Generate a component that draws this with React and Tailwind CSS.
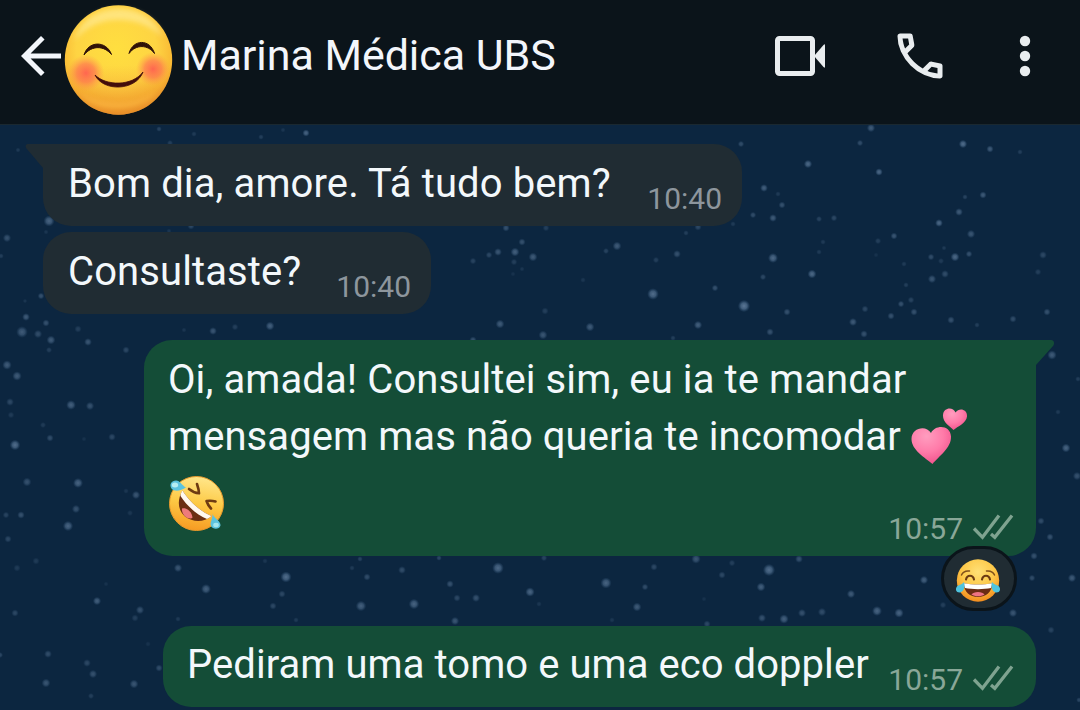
import React from "react";

// [x, y, radius, opacity]
const stars = [
  [871, 3, 3, 0.6], [860, 18, 2.3, 0.45], [741, 19, 2.3, 0.45], [963, 19, 3, 0.8], [990, 24, 2.6, 0.6], [1020, 27, 2, 0.3],
  [808, 39, 3, 0.75], [879, 47, 2.7, 0.75], [764, 63, 2.8, 0.65], [782, 80, 2.5, 0.5], [753, 90, 2.3, 0.45], [773, 93, 2.8, 0.6],
  [819, 94, 2.2, 0.35], [834, 93, 2.4, 0.4], [778, 69, 2, 0.25], [983, 70, 2.6, 0.6], [965, 72, 2, 0.35], [959, 87, 2.8, 0.6],
  [939, 98, 2.8, 0.75], [971, 109, 3, 0.55], [894, 111, 2.5, 0.55], [878, 116, 2.3, 0.3], [823, 117, 2, 0.25], [819, 127, 2, 0.25],
  [955, 132, 3.2, 0.75], [969, 129, 2.4, 0.5], [931, 132, 2.4, 0.45], [944, 123, 1.8, 0.25], [941, 136, 2.2, 0.25], [773, 133, 3.6, 0.75],
  [763, 152, 2.3, 0.4], [812, 149, 3.2, 0.75], [904, 139, 2, 0.25], [876, 130, 1.8, 0.15], [945, 149, 2.8, 0.45], [932, 154, 3, 0.55],
  [1043, 130, 2.8, 0.4], [1038, 147, 2.4, 0.3], [906, 160, 2, 0.3], [911, 175, 2.4, 0.35], [901, 179, 2.4, 0.5], [914, 187, 2.6, 0.5],
  [891, 191, 2.6, 0.5], [865, 184, 2.5, 0.4], [853, 197, 2.9, 0.6], [864, 209, 2.7, 0.5], [653, 169, 4.2, 0.8], [715, 163, 2.4, 0.5],
  [744, 181, 4.4, 0.9], [787, 187, 2.6, 0.5], [698, 200, 3, 0.65], [770, 207, 2.7, 0.5], [673, 213, 2, 0.3], [617, 121, 3.2, 0.6],
  [606, 126, 2.2, 0.35], [656, 135, 2.3, 0.3], [677, 129, 2.8, 0.5], [686, 108, 2, 0.3], [698, 102, 2.6, 0.4], [951, 195, 2.7, 0.5],
  [977, 200, 2, 0.3], [1013, 194, 2.6, 0.45], [1047, 187, 2.6, 0.5], [733, 99, 2, 0.25], [1052, 230, 3.4, 0.6], [1078, 254, 2, 0.3],
  [1058, 287, 2, 0.25], [1066, 323, 3.2, 0.7], [1077, 351, 3, 0.5], [1041, 396, 2.6, 0.45], [1050, 412, 2.6, 0.5], [1034, 431, 2.7, 0.5],
  [1032, 453, 2.4, 0.45], [1072, 453, 3, 0.6], [1013, 488, 3, 0.55], [1051, 505, 2.6, 0.35], [924, 455, 3, 0.65], [877, 486, 3.6, 0.7],
  [899, 488, 3.4, 0.7], [943, 480, 2.4, 0.3], [1079, 575, 2, 0.4],
  // top left
  [159, 4, 2, 0.35], [194, 9, 2, 0.25], [306, 8, 2.6, 0.7], [261, 12, 2, 0.3], [283, 5, 1.8, 0.2], [170, 18, 2.2, 0.3], [18, 25, 1.8, 0.25],
  [49, 96, 4, 0.7], [7, 113, 3, 0.5], [1, 131, 2, 0.3], [46, 107, 1.8, 0.2], [41, 171, 2.4, 0.5], [25, 176, 1.6, 0.2], [26, 192, 2.8, 0.6],
  [191, 101, 2.6, 0.4], [169, 106, 1.8, 0.2], [506, 103, 2.6, 0.5], [546, 103, 2.4, 0.3], [46, 198, 2.6, 0.5], [184, 205, 1.8, 0.2],
  [22, 207, 4.2, 0.6], [38, 209, 3, 0.45], [51, 215, 3.2, 0.6], [49, 225, 2.2, 0.3], [78, 204, 2.6, 0.3], [88, 217, 2.8, 0.55],
  [126, 225, 2.6, 0.4], [213, 206, 2.8, 0.55], [235, 202, 2.4, 0.3], [270, 201, 3.2, 0.65],
  // between the incoming and outgoing bubbles
  [522, 117, 2.6, 0.5], [498, 127, 2.8, 0.55], [489, 130, 2.4, 0.4], [515, 127, 3.2, 0.65], [533, 132, 3.2, 0.6], [473, 136, 2.4, 0.35],
  [514, 137, 2.4, 0.3], [522, 144, 1.8, 0.2], [513, 149, 1.8, 0.15], [583, 155, 2, 0.2], [545, 186, 2.6, 0.3], [500, 199, 3.2, 0.6],
  [543, 210, 3.2, 0.55], [590, 202, 3.2, 0.6], [473, 215, 2.6, 0.5],
  // left column
  [7, 240, 3.4, 0.6], [17, 251, 3.4, 0.6], [10, 277, 2.8, 0.4], [11, 290, 2.4, 0.25], [71, 280, 3.5, 0.65], [90, 281, 3, 0.5],
  [43, 300, 2.2, 0.25], [50, 313, 2.6, 0.45], [112, 312, 2.7, 0.4], [84, 314, 1.8, 0.15], [15, 320, 3.8, 0.8], [27, 357, 3.2, 0.5],
  [78, 358, 3.6, 0.7], [136, 370, 3, 0.55], [126, 366, 2, 0.2], [76, 384, 3, 0.5], [68, 401, 3.7, 0.7], [6, 390, 2.4, 0.35],
  [21, 390, 2.7, 0.5], [130, 388, 2.2, 0.2], [8, 414, 2.6, 0.4], [36, 436, 2.6, 0.25], [17, 443, 2.6, 0.25], [106, 459, 1.8, 0.15],
  [97, 476, 3, 0.65], [140, 485, 3, 0.5], [135, 493, 2.6, 0.3], [15, 488, 2.6, 0.4], [0, 530, 2.2, 0.4], [48, 529, 2.8, 0.45],
  [87, 538, 2.8, 0.4], [93, 549, 3, 0.5], [46, 558, 3.2, 0.55], [134, 559, 3.2, 0.55], [91, 571, 2.2, 0.3], [159, 543, 2.6, 0.45],
  [148, 519, 2, 0.15],
  // strip above the last bubble
  [178, 443, 3, 0.55], [206, 464, 3.6, 0.65], [286, 452, 4, 0.8], [282, 469, 2.6, 0.4], [273, 481, 2.6, 0.4], [178, 494, 2, 0.25],
  [296, 495, 2, 0.25], [265, 436, 2, 0.2], [360, 434, 2, 0.35], [352, 443, 2, 0.25], [367, 452, 2.6, 0.45], [402, 445, 2.8, 0.45],
  [361, 481, 3.8, 0.65], [414, 479, 3.8, 0.7], [439, 433, 2, 0.4], [450, 459, 2.7, 0.5], [457, 473, 2.6, 0.4], [476, 473, 2.9, 0.5],
  [455, 496, 3, 0.55], [498, 443, 4.2, 0.75], [544, 433, 2.3, 0.35], [530, 467, 3.4, 0.7], [539, 479, 2, 0.2], [606, 458, 4, 0.7],
  [637, 482, 3.2, 0.6], [645, 462, 2.4, 0.45], [654, 442, 2.6, 0.4], [696, 434, 3.4, 0.55], [722, 450, 2.6, 0.4], [732, 438, 2.4, 0.3],
  [769, 445, 4.4, 0.8], [761, 462, 3.2, 0.65], [799, 434, 2.8, 0.5], [762, 493, 2.9, 0.5], [784, 494, 3.4, 0.65], [802, 488, 2.9, 0.5],
  [822, 487, 3, 0.45], [851, 469, 3, 0.6], [707, 499, 2.6, 0.4], [612, 495, 2, 0.2], [704, 474, 1.8, 0.15],
];

function StarField() {
  return (
    <svg className="absolute inset-0" width="1080" height="585" viewBox="0 0 1080 585" aria-hidden="true">
      <defs>
        <radialGradient id="star">
          <stop offset="0" stopColor="#64809f" />
          <stop offset="0.5" stopColor="#516f8f" stopOpacity="0.85" />
          <stop offset="1" stopColor="#35587c" stopOpacity="0" />
        </radialGradient>
      </defs>
      {stars.map(([x, y, r, o], i) => (
        <circle key={i} cx={x} cy={y} r={r * 1.4} fill="url(#star)" opacity={o} />
      ))}
    </svg>
  );
}

function SmilingFace() {
  return (
    <svg className="shrink-0" width="110" height="112" viewBox="63 4 110 112" aria-hidden="true">
      <defs>
        <radialGradient id="face" cx="0.48" cy="0.4" r="0.62">
          <stop offset="0" stopColor="#ffdf3f" />
          <stop offset="0.6" stopColor="#fed443" />
          <stop offset="0.85" stopColor="#f9b934" />
          <stop offset="1" stopColor="#e08c2a" />
        </radialGradient>
        <linearGradient id="faceShade" x1="0" y1="0" x2="0" y2="1">
          <stop offset="0.55" stopColor="#f39a2d" stopOpacity="0" />
          <stop offset="1" stopColor="#e98a27" stopOpacity="0.7" />
        </linearGradient>
        <radialGradient id="blush">
          <stop offset="0" stopColor="#ff6150" stopOpacity="0.95" />
          <stop offset="0.5" stopColor="#ff7450" stopOpacity="0.7" />
          <stop offset="1" stopColor="#ff9a48" stopOpacity="0" />
        </radialGradient>
        <filter id="soft" x="-20%" y="-40%" width="140%" height="180%">
          <feGaussianBlur stdDeviation="2.6" />
        </filter>
      </defs>
      <ellipse cx="118.5" cy="60" rx="53.7" ry="54.7" fill="url(#face)" />
      <ellipse cx="118.5" cy="60" rx="53.7" ry="54.7" fill="url(#faceShade)" />
      <path d="M74 40C82 18 100 9 119 9s36 9 44 28C152 27 138 20 118 20S86 28 74 40Z" fill="#ffe98f" opacity="0.75" filter="url(#soft)" />
      <path d="M80 93c20 14 58 14 76-1-12 18-59 23-76 1Z" fill="#ffc04e" opacity="0.6" filter="url(#soft)" />
      <circle cx="86" cy="73" r="18.5" fill="url(#blush)" />
      <circle cx="153" cy="69" r="17" fill="url(#blush)" />
      <path d="M84 55C88 41 106 40 111.500 54.500C104 45.500 92 45 84 55Z" fill="#301208" stroke="#301208" strokeWidth="1" />
      <path d="M129 53.500C133 39 150 38.500 154.500 53.500C148 44.500 136 44 129 53.500Z" fill="#301208" stroke="#301208" strokeWidth="1" />
      <path d="M95 75C106 86 132 86.500 143 72C136 91 103 92 95 75Z" fill="#430e0b" stroke="#430e0b" strokeWidth="0.8" />
    </svg>
  );
}

function RollingLaugh() {
  return (
    <svg width="57" height="57" viewBox="168 475 57 57" className="block" aria-hidden="true">
      <defs>
        <linearGradient id="rofl" x1="0.55" y1="0" x2="0.4" y2="1">
          <stop offset="0" stopColor="#ffe68a" />
          <stop offset="0.5" stopColor="#fdc944" />
          <stop offset="1" stopColor="#f79a22" />
        </linearGradient>
      </defs>
      <circle cx="196.500" cy="503.500" r="27" fill="url(#rofl)" stroke="#e99a2c" strokeWidth="1" />
      <path d="M182.500 490.500C177 500 177.500 510 185 516.500C193 522.500 204 522.500 211.500 516C201 512 189 501 182.500 490.500Z" fill="#6b2f12" />
      <path d="M182.500 490.500C181 492.500 180.500 494.500 180.500 496C187 506 197 515 207 519C209 518 210.500 517 211.500 516C201 512 189 501 182.500 490.500Z" fill="#fff8ef" />
      <path d="M182 508.500c4-1.500 10 3 10.500 9-1 1.500-4 1-6 0-3-2-5-6-4.500-9Z" fill="#ee7b7b" />
      <path d="M189 489C192 491.500 195 493 199 493.300C199 490 198 487 197 484" fill="none" stroke="#6d3b12" strokeWidth="2.600" strokeLinecap="round" strokeLinejoin="round" />
      <path d="M215.500 501.500C212 500.500 209.500 500.500 206.500 501C207.500 504 209 506.500 211 508.500" fill="none" stroke="#6d3b12" strokeWidth="2.600" strokeLinecap="round" strokeLinejoin="round" />
      <path d="M186 487.500C181 491 174 492 171.500 488.500C169 484.500 171.500 480.500 176 480.500C180 480.500 182 485.500 186 487.500Z" fill="#5cc3df" />
      <ellipse cx="175" cy="485" rx="3.200" ry="2.500" fill="#b6eef2" />
      <path d="M212.500 514C214 518.500 221 521 220.500 525.500C219.500 529.500 213 530 211 526C209.500 522.500 213 518.500 212.500 514Z" fill="#5cc3df" />
      <ellipse cx="216" cy="525" rx="2.800" ry="2.200" fill="#a4e6ef" />
    </svg>
  );
}

function JoyFace() {
  return (
    <svg width="46" height="46" viewBox="955 557 46 46" aria-hidden="true">
      <defs>
        <radialGradient id="joy" cx="0.5" cy="0.3" r="0.7">
          <stop offset="0" stopColor="#ffe076" />
          <stop offset="0.55" stopColor="#fdc848" />
          <stop offset="1" stopColor="#f28c1e" />
        </radialGradient>
      </defs>
      <circle cx="978" cy="580.500" r="21.200" fill="url(#joy)" />
      <path d="M961.500 575C963 571.500 965.500 570.500 969.500 571M994.500 575C993 571.500 990.500 570.500 986.500 571" fill="none" stroke="#80501a" strokeWidth="1.500" strokeLinecap="round" />
      <path d="M966 579.500C967 574.500 973 574.500 974 579.500M982 579.500C983 574.500 989 574.500 990 579.500" fill="none" stroke="#6c3b13" strokeWidth="2.100" strokeLinecap="round" />
      <path d="M963.500 583C971 585 985 585 992.500 583C992 592 986 597 978 597S964 592 963.500 583Z" fill="#6b2c14" />
      <path d="M964 583.300C972 585 984 585 992 583.300C992 585.500 991.500 587 991 588C984 589.500 972 589.500 965 588C964.500 587 964 585.500 964 583.300Z" fill="#fff" />
      <path d="M971.500 594.500c2-3.500 11-3.500 13 0-3.500 2.400-9.500 2.400-13 0Z" fill="#ee7383" />
      <path d="M964 582C965.500 587 963.500 592.500 959.500 592.500C956 592.500 955 589 957 586.500C959 584.500 961.500 585 964 582Z" fill="#4fc4df" />
      <path d="M992 582C990.500 587 992.500 592.500 996.500 592.500C1000 592.500 1001 589 999 586.500C997 584.500 994.500 585 992 582Z" fill="#4fc4df" />
    </svg>
  );
}

function TwoHearts() {
  return (
    <svg width="58" height="58" viewBox="910 407 58 58" className="inline-block align-[-15px]" aria-hidden="true">
      <defs>
        <radialGradient id="heart" cx="0.38" cy="0.25" r="0.85">
          <stop offset="0" stopColor="#ff9dbf" />
          <stop offset="0.5" stopColor="#ff7ba9" />
          <stop offset="1" stopColor="#ee4a86" />
        </radialGradient>
      </defs>
      <path d="M932.500 464C925 457.500 911.500 450 911.500 439C911.500 428 926 424.500 931 433C935 424.500 950.500 424.500 951 436.500C951.500 448 938.500 456.500 932.500 464Z" fill="url(#heart)" />
      <path d="M953.500 430C949.500 426 942.500 422 943 415C943.500 407.500 953 406.500 955.500 412.500C959 407.500 967.500 409 967 416.500C966.500 423 957.500 426.500 953.500 430Z" fill="url(#heart)" />
    </svg>
  );
}

function ReadTicks() {
  return (
    <svg width="42" height="28" viewBox="973 513 42 28" fill="none" stroke="#7fa390" strokeWidth="3.300" aria-hidden="true">
      <path d="M975 528.500L983.500 537.300L1000 515.500" />
      <path d="M992 534L995.800 537.300L1013 515.500" />
    </svg>
  );
}

function Tail({ side }) {
  return side === "left" ? (
    <svg className="absolute -left-[18px] top-0" width="30" height="26" viewBox="0 0 30 26" aria-hidden="true">
      <path d="M30 0H3C.5 0 0 2.500 1.500 4.500L18 24V26H30Z" fill="#202c33" />
    </svg>
  ) : (
    <svg className="absolute -right-[18px] top-0" width="30" height="27" viewBox="0 0 30 27" aria-hidden="true">
      <path d="M0 0H27C30 0 31 3.500 29 6L12 25V27H0Z" fill="#144d37" />
    </svg>
  );
}

function Header() {
  return (
    <header className="flex h-[125px] shrink-0 items-start border-b border-[#1a2830] bg-[#0b141a] text-[#e9edef]">
      <button className="ml-[11px] mt-[26px] h-[60px] w-[52px] shrink-0 overflow-hidden" aria-label="Voltar">
        <svg width="60" height="60" viewBox="0 0 24 24" fill="#f3f6fb">
          <path d="M20 11H7.830l5.590-5.590L12 4l-8 8 8 8 1.410-1.410L7.830 13H20z" />
        </svg>
      </button>
      <div className="mt-1">
        <SmilingFace />
      </div>
      <h1 className="ml-[8px] mt-[26px] flex-1 whitespace-nowrap text-[43px] leading-[58px] tracking-[-0.05px] text-[#f3f6fb]">Marina Médica UBS</h1>
      <div className="flex pt-[26px]">
        <svg width="60" height="60" viewBox="770 26 60 60" aria-label="Chamada de vídeo">
          <rect x="777.500" y="38.500" width="35" height="35" rx="2" fill="none" stroke="#e9edef" strokeWidth="5" />
          <path d="M814 56L823.500 45Q825 43.500 825 45.500V66.500Q825 68.500 823.500 67Z" fill="#e9edef" />
        </svg>
        <svg className="ml-[60px]" width="60" height="60" viewBox="0 -960 960 960" fill="#e9edef" aria-label="Ligar">
          <path d="M798-120q-125 0-247-54.500T329-329Q229-429 174.500-551T120-798q0-18 12-30t30-12h162q14 0 25 9.500t13 22.500l26 140q2 16-1 27t-11 19l-97 98q20 37 47.500 71.500T387-386q31 31 65 57.500t72 48.500l94-94q9-9 23.500-13.500T670-390l138 28q14 4 23 14.500t9 23.500v162q0 18-12 30t-30 12ZM241-600l66-66-17-94h-89q5 41 14 81t26 79Zm358 358q39 17 79.500 27t81.500 13v-88l-94-19-67 67Z" />
        </svg>
        <svg className="ml-[45px] mr-[25px]" width="60" height="60" viewBox="995 26 60 60" fill="#e9edef" aria-label="Mais opções">
          <circle cx="1025" cy="41" r="5.200" />
          <circle cx="1025" cy="56" r="5.200" />
          <circle cx="1025" cy="71" r="5.200" />
        </svg>
      </div>
    </header>
  );
}

export default function App() {
  return (
    <div className="flex h-[710px] w-[1080px] flex-col overflow-hidden bg-[#0c2640] font-['Roboto',sans-serif]">
      <Header />
      <main className="relative flex flex-1 flex-col overflow-hidden pt-[19px] text-[40px] text-[#f3f8fb]">
        <StarField />

        <div className="relative ml-[43px] flex h-[82px] w-[699px] shrink-0 justify-between rounded-[28px] rounded-tl-none bg-[#202c33] pl-[25px] pr-[20px]">
          <Tail side="left" />
          <p className="whitespace-nowrap pt-[11px] leading-[57px] tracking-[0.11px]">Bom dia, amore. Tá tudo bem?</p>
          <span className="pt-[37px] text-[30px] leading-9 text-[#8d969d]">10:40</span>
        </div>

        <div className="relative ml-[43px] mt-[6px] flex h-[82px] w-[388px] shrink-0 justify-between rounded-[28px] bg-[#202c33] pl-[25px] pr-[20px]">
          <p className="whitespace-nowrap pt-[11px] leading-[57px] tracking-[0.1px]">Consultaste?</p>
          <span className="pt-[37px] text-[30px] leading-9 text-[#8d969d]">10:40</span>
        </div>

        <div className="relative ml-[144px] mt-[26px] flex h-[216px] w-[892px] shrink-0 flex-col rounded-[28px] rounded-tr-none bg-[#144d37] pl-[24px] pr-[22px] pt-[11px]">
          <Tail side="right" />
          <p className="h-[56px] whitespace-nowrap leading-[57px] tracking-[0.1px]">Oi, amada! Consultei sim, eu ia te mandar</p>
          <p className="h-[68px] whitespace-nowrap leading-[57px]">
            <span className="mr-[9px] tracking-[0.08px]">mensagem mas não queria te incomodar</span>
            <TwoHearts />
          </p>
          <div className="flex justify-between">
            <RollingLaugh />
            <div className="flex gap-[9px] pt-[36px] text-[30px] leading-9 text-[#89a798]">
              10:57
              <span className="pt-[2px]">
                <ReadTicks />
              </span>
            </div>
          </div>
          <div className="absolute -bottom-[55px] right-[19px] flex h-[65px] w-[76px] items-center justify-center rounded-[33px] border-[3px] border-[#0b141a] bg-[#202c33] pt-[2px] pr-[2px]">
            <JoyFace />
          </div>
        </div>

        <div className="relative ml-[163px] mt-[70px] flex h-[81px] w-[873px] shrink-0 justify-between rounded-[28px] bg-[#144d37] pl-[24px] pr-[22px]">
          <p className="whitespace-nowrap pt-[10px] leading-[57px] tracking-[0.06px]">Pediram uma tomo e uma eco doppler</p>
          <div className="flex gap-[9px] pt-[36px] text-[30px] leading-9 text-[#89a798]">
            10:57
            <span className="pt-[2px]">
              <ReadTicks />
            </span>
          </div>
        </div>
      </main>
    </div>
  );
}
